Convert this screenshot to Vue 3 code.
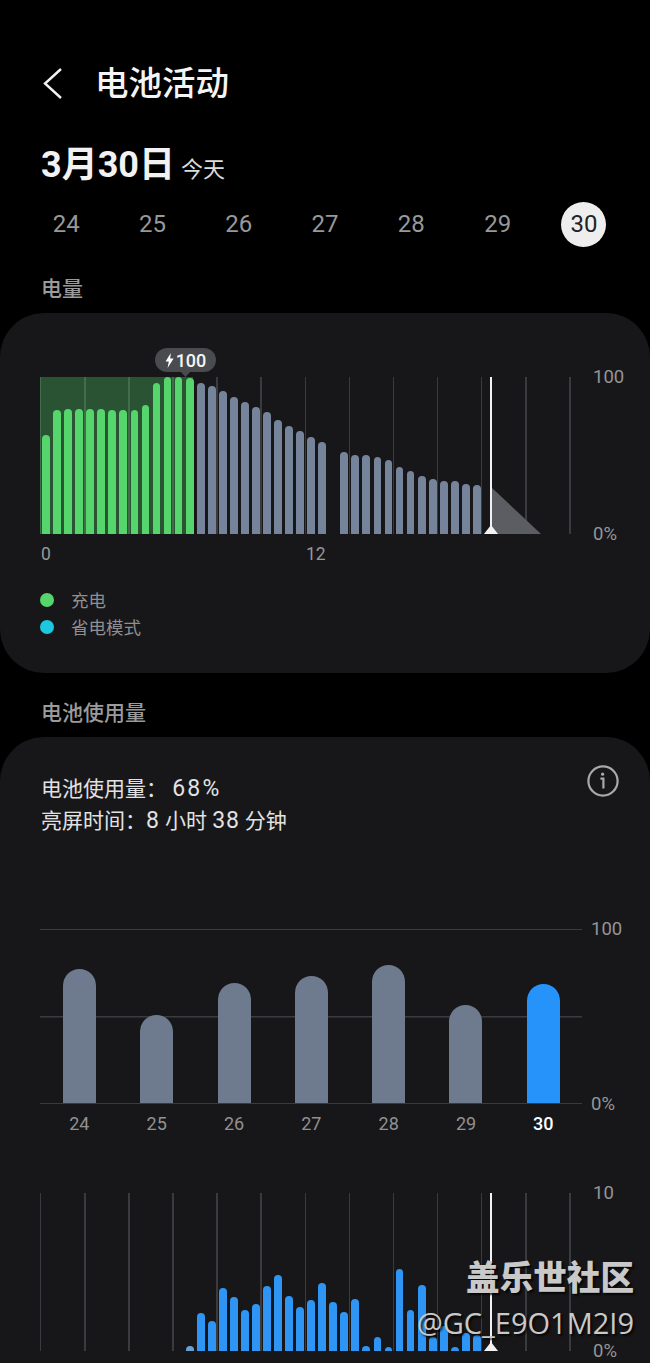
<script setup>
const days = [24, 25, 26, 27, 28, 29, 30]

const levelHeights = [98.6, 124, 125, 125, 125, 125, 124, 124, 124, 128.6, 150.6, 157, 157, 155.6,
  150.6, 147.6, 142.6, 136.6, 131.6, 127, 122.3, 114.3, 108, 103.3, 97, 92.3, 0,
  81.6, 78.6, 78.6, 77, 74, 67.3, 62.6, 58, 54.6, 53.3, 53.3, 50, 48.6]
const levelBars = levelHeights.map((h, i) => ({ h, kind: i < 14 ? 'green' : 'slate' }))

const weekBars = [
  { d: 24, h: 134 }, { d: 25, h: 88 }, { d: 26, h: 120 }, { d: 27, h: 127 },
  { d: 28, h: 138 }, { d: 29, h: 98 }, { d: 30, h: 119, today: true }
]

const usageHeights = [0, 0, 0, 0, 0, 0, 0, 0, 0, 0, 0, 0, 0,
  5, 38, 30, 63.4, 53.7, 41, 47.4, 65, 76, 55.4, 44.4, 50.7, 68, 49,
  39.4, 52.4, 5, 14.4, 4, 82.4, 41, 66.4, 13.7, 25, 4, 18.4, 16]
</script>

<template>
  <div class="page">
    <header class="top">
      <svg class="back" width="20" height="34" viewBox="0 0 20 34">
        <polyline points="18,2 2,16.5 18,31" fill="none" stroke="#f2f2f2" stroke-width="2.4" />
      </svg>
      <h1 class="title">电池活动</h1>
    </header>

    <div class="date"><strong>3月30日</strong><span>今天</span></div>

    <div class="days">
      <div v-for="d in days" :key="d" class="day" :class="{ sel: d === 30 }"><span>{{ d }}</span></div>
    </div>

    <div class="label">电量</div>
    <section class="card first">
      <div class="row">
        <div class="plot vgrid level">
          <div class="shade"></div>
          <div class="bars">
            <div v-for="(b, i) in levelBars" :key="i" class="slot">
              <i v-if="b.h" class="bar" :class="b.kind" :style="{ height: b.h + 'px' }"></i>
            </div>
          </div>
          <svg class="forecast" width="50" height="47" viewBox="0 0 50 47">
            <polygon points="0,0 50,47 0,47" fill="#5c5d62" />
          </svg>
          <div class="now"></div>
          <div class="tip">
            <svg width="9" height="15" viewBox="0 0 9 15"><polygon points="5.8,0 0.6,8.6 3.8,8.6 2.6,15 8.6,5.6 5.2,5.6" fill="#fff" /></svg>
            <span>100</span>
          </div>
        </div>
        <div class="axis"><span>100</span><span>0%</span></div>
      </div>
      <div class="hours"><span>0</span><span class="noon">12</span></div>
      <ul class="legend">
        <li><i class="dot charge"></i>充电</li>
        <li><i class="dot saver"></i>省电模式</li>
      </ul>
    </section>

    <div class="label second">电池使用量</div>
    <section class="card">
      <div class="summary">
        <div class="lines">
          <div>电池使用量： <span class="num pct">68%</span></div>
          <div>亮屏时间：<span class="num">8</span> 小时 <span class="num">38</span> 分钟</div>
        </div>
        <svg class="info" width="32" height="32" viewBox="0 0 32 32">
          <circle cx="16" cy="16" r="14.6" fill="none" stroke="#a9a9a9" stroke-width="2.2" />
          <circle cx="15.6" cy="9.2" r="1.6" fill="#a9a9a9" />
          <path d="M13.4 13.6h3v10" fill="none" stroke="#a9a9a9" stroke-width="2.2" />
        </svg>
      </div>

      <div class="row week-row">
        <div class="week">
          <div v-for="b in weekBars" :key="b.d" class="week-slot">
            <i class="pill" :class="{ today: b.today }" :style="{ height: b.h + 'px' }"></i>
          </div>
        </div>
        <div class="axis wide"><span>100</span><span>0%</span></div>
      </div>
      <div class="week-days">
        <span v-for="b in weekBars" :key="b.d" :class="{ today: b.today }">{{ b.d }}</span>
      </div>

      <div class="row usage-row">
        <div class="plot vgrid usage">
          <div class="bars">
            <div v-for="(h, i) in usageHeights" :key="i" class="slot">
              <i v-if="h" class="bar blue" :class="{ faint: i === 13 }" :style="{ height: h + 'px' }"></i>
            </div>
          </div>
          <div class="now"></div>
        </div>
        <div class="axis"><span>10</span><span>0%</span></div>
      </div>
    </section>

    <div class="mark">
      <div class="mark-a">盖乐世社区</div>
      <div class="mark-b">@GC_E9O1M2I9</div>
    </div>
  </div>
</template>

<style>
html, body { margin: 0; background: #000; }
</style>

<style scoped>
.page {
  position: relative;
  width: 650px;
  height: 1363px;
  overflow: hidden;
  background: #000;
  font-family: Roboto, "Noto Sans CJK SC", sans-serif;
  color: #fff;
}
.top {
  display: flex;
  align-items: center;
  height: 48px;
  padding: 60px 0 0 43px;
}
.back { display: block; margin-right: 32px; }
.title {
  margin: 0;
  font-size: 33.5px;
  font-weight: 500;
  line-height: 48px;
  color: #f4f4f4;
}
.date {
  display: flex;
  align-items: baseline;
  height: 44px;
  margin-top: 35px;
  padding-left: 41px;
  line-height: 44px;
}
.date strong { font-size: 36px; font-weight: 700; color: #f2f2f2; }
.date span { margin-left: 6px; font-size: 22px; color: #dcdcdc; }
.days {
  display: flex;
  height: 46px;
  margin-top: 14px;
  padding-left: 23px;
}
.day {
  flex: 0 0 86.3px;
  display: flex;
  justify-content: center;
  align-items: center;
  font-size: 24px;
  color: #989898;
}
.day.sel span {
  display: flex;
  justify-content: center;
  align-items: center;
  width: 45px;
  height: 45px;
  border-radius: 50%;
  background: #eeeeee;
  color: #222;
}
.label {
  height: 27px;
  margin-top: 29px;
  padding-left: 41px;
  font-size: 21px;
  font-weight: 500;
  line-height: 27px;
  color: #9b9b9b;
}
.label.second { margin-top: 27px; }
.card {
  margin-top: 10px;
  padding: 35.5px 31px 0 40px;
  border-radius: 44px;
  background: #17171a;
  height: 700px;
}
.card.first {
  height: 360px;
  box-sizing: border-box;
  padding-top: 64px;
}
.row { display: flex; }
.plot { position: relative; width: 531px; flex: none; }
.vgrid::before {
  content: "";
  position: absolute;
  inset: 0;
  background-image: repeating-linear-gradient(90deg, #3a3b3e 0, #3a3b3e 1.5px, transparent 1.5px, transparent 44.1px);
}
.level { height: 157px; }
.usage { height: 158.5px; }
.shade {
  position: absolute;
  left: 0;
  top: 0;
  width: 153px;
  height: 100%;
  background: rgba(85, 213, 107, 0.32);
}
.bars {
  position: relative;
  display: flex;
  align-items: flex-end;
  height: 100%;
  padding-left: 0.5px;
}
.slot {
  flex: 0 0 11.05px;
  display: flex;
  justify-content: center;
  align-items: flex-end;
}
.bar {
  display: block;
  width: 7.8px;
  border-radius: 3.9px 3.9px 0 0;
}
.green { background: #55d56b; }
.slate { background: #76849b; }
.blue { background: #2e95f5; }
.faint { background: #6aa0d6; }
.forecast { position: absolute; left: 451px; bottom: 0; }
.now {
  position: absolute;
  left: 450px;
  top: 0;
  bottom: 0;
  width: 2px;
  background: #f2f2f2;
}
.now::after {
  content: "";
  position: absolute;
  left: -6px;
  bottom: 0;
  width: 14px;
  height: 9px;
  background: #f2f2f2;
  clip-path: polygon(50% 0, 100% 100%, 0 100%);
}
.tip {
  position: absolute;
  left: 115px;
  top: -29px;
  display: flex;
  align-items: center;
  justify-content: center;
  gap: 2px;
  width: 61px;
  height: 24px;
  border-radius: 12px;
  background: #4a4b4f;
  font-size: 18px;
  font-weight: 500;
  color: #f5f5f5;
}
.tip::after {
  content: "";
  position: absolute;
  left: 26px;
  bottom: -5px;
  width: 9px;
  height: 5px;
  background: #4a4b4f;
  clip-path: polygon(0 0, 100% 0, 50% 100%);
}
.axis {
  display: flex;
  flex-direction: column;
  justify-content: space-between;
  margin: -12px 0 -12px 22px;
  font-size: 18.5px;
  line-height: 24px;
  color: #959595;
}
.axis.wide { margin-left: 9px; }
.hours {
  position: relative;
  height: 20px;
  margin-top: 10px;
  padding-left: 1px;
  font-size: 17.5px;
  line-height: 20px;
  color: #989898;
}
.noon { position: absolute; left: 266px; }
.legend {
  margin: 22px 0 0;
  padding: 0;
  list-style: none;
  font-size: 17.5px;
  color: #8f8f8f;
}
.legend li {
  display: flex;
  align-items: center;
  height: 27px;
}
.dot {
  width: 14px;
  height: 14px;
  margin-right: 17px;
  border-radius: 50%;
}
.charge { background: #55d56b; }
.saver { background: #1cc8e0; }
.summary {
  display: flex;
  justify-content: space-between;
  align-items: flex-start;
  padding-left: 1px;
}
.lines {
  font-size: 21px;
  line-height: 32.5px;
  color: #e2e2e2;
}
.num { font-size: 23px; letter-spacing: 0.8px; }
.pct { letter-spacing: 2.2px; }
.info { margin: -7.5px 0 0 0; }
.week-row { margin-top: 91.5px; }
.week {
  display: flex;
  align-items: flex-end;
  box-sizing: border-box;
  width: 542px;
  height: 175px;
  flex: none;
  padding-left: 0.7px;
  border-top: 1.5px solid #3a3b3e;
  border-bottom: 1.5px solid #3a3b3e;
  background-image: linear-gradient(#3a3b3e, #3a3b3e);
  background-size: 100% 1.5px;
  background-position: 0 50%;
  background-repeat: no-repeat;
}
.week-slot {
  flex: 1;
  display: flex;
  justify-content: center;
}
.pill {
  display: block;
  width: 33px;
  border-radius: 16.5px 16.5px 0 0;
  background: #6e7b8e;
}
.pill.today { background: #2693fb; }
.week-days {
  display: flex;
  box-sizing: border-box;
  width: 542px;
  height: 22px;
  margin-top: 8.5px;
  padding-left: 0.7px;
  font-size: 18px;
  line-height: 22px;
  color: #919191;
}
.week-days span { flex: 1; text-align: center; }
.week-days .today { color: #fff; font-weight: 500; }
.usage-row { margin-top: 58px; }
.mark {
  position: absolute;
  right: 16px;
  top: 1256px;
  text-align: right;
  color: #c9c9c9;
  text-shadow: 2px 2px 2px rgba(0, 0, 0, 0.75);
  pointer-events: none;
}
.mark-a {
  font-size: 33.6px;
  font-weight: 900;
  line-height: 40px;
  font-family: "Noto Sans CJK SC", sans-serif;
}
.mark-b {
  margin-top: 11px;
  font-family: "Open Sans", "Noto Sans", sans-serif;
  font-size: 29px;
  line-height: 32px;
}
</style>
